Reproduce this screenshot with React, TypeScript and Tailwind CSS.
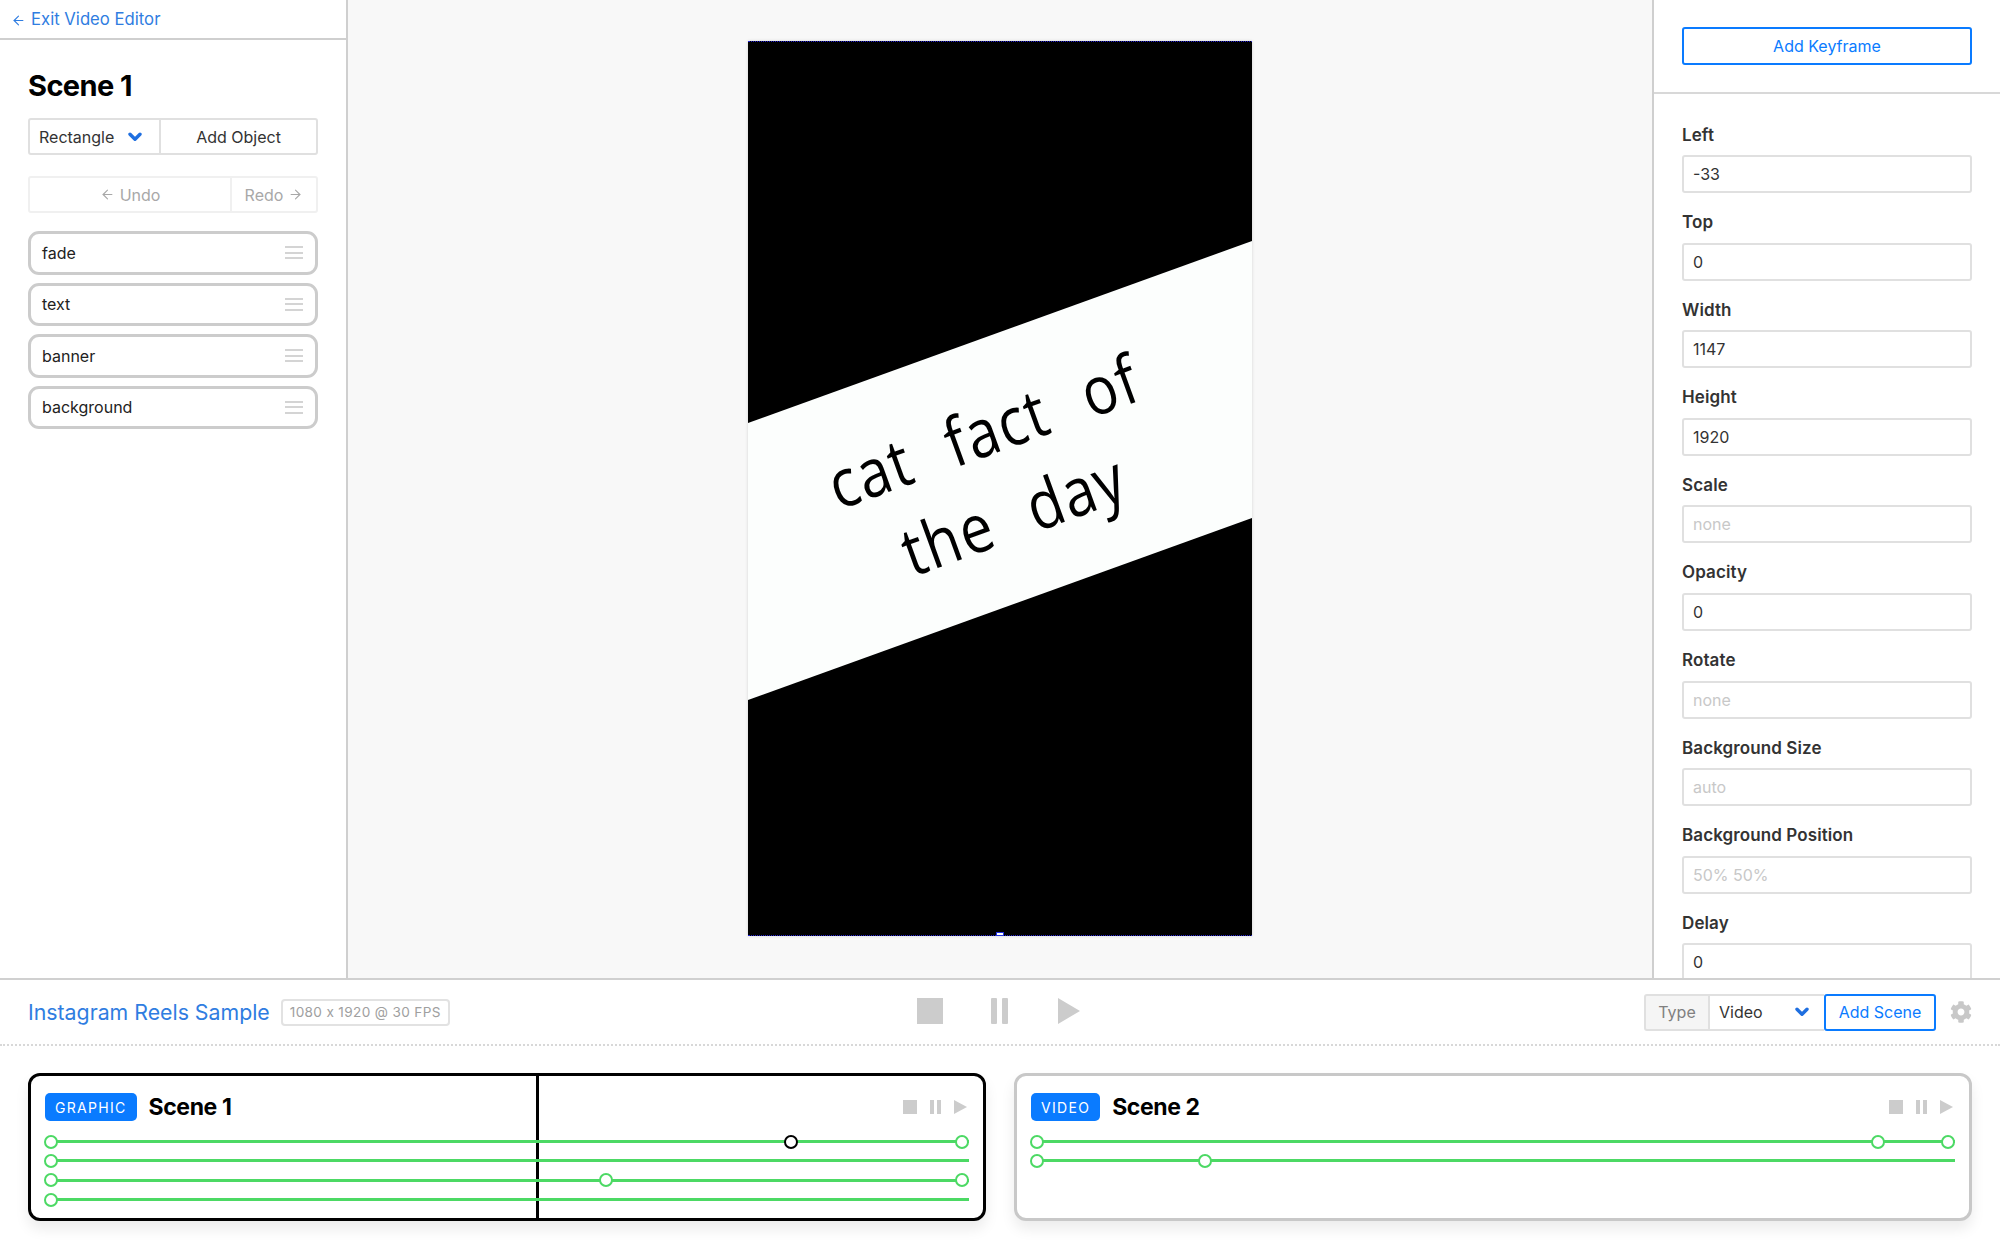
import React from 'react';
import { ArrowLeft, ArrowRight } from 'lucide-react';
import { FaCog } from 'react-icons/fa';

const fields = [
  { label: 'Left', value: '-33' },
  { label: 'Top', value: '0' },
  { label: 'Width', value: '1147' },
  { label: 'Height', value: '1920' },
  { label: 'Scale', placeholder: 'none' },
  { label: 'Opacity', value: '0' },
  { label: 'Rotate', placeholder: 'none' },
  { label: 'Background Size', placeholder: 'auto' },
  { label: 'Background Position', placeholder: '50% 50%' },
  { label: 'Delay', value: '0' },
];

const layers = ['fade', 'text', 'banner', 'background'];

// keyframe positions are px from the start of the track
const scene1Tracks = [
  { keys: [0, 911], active: 740 },
  { keys: [0] },
  { keys: [0, 555, 911] },
  { keys: [0] },
];
const scene2Tracks = [{ keys: [0, 841, 911] }, { keys: [0, 168] }];

const Chevron = ({ className }: { className?: string }) => (
  <svg className={className} width="14" height="10" viewBox="0 0 14 10">
    <path d="M2 2.2 L7 7.2 L12 2.2" fill="none" stroke="#1f6fe0" strokeWidth="3.4" strokeLinecap="round" strokeLinejoin="round" />
  </svg>
);

const Track = ({ keys, active }: { keys: number[]; active?: number }) => (
  <div className="relative h-[19.4px] w-[924px]">
    <div className="absolute left-0 right-0 top-[8px] h-[3px] bg-[#4cd964]" />
    {keys.map((k) => (
      <div
        key={k}
        className="absolute top-[2.5px] ml-[-1px] h-[14px] w-[14px] rounded-full border-2 border-[#4cd964] bg-white"
        style={{ left: k }}
      />
    ))}
    {active !== undefined && (
      <div
        className="absolute top-[2.5px] ml-[-1px] h-[14px] w-[14px] rounded-full border-2 border-black bg-white"
        style={{ left: active }}
      />
    )}
  </div>
);

const Transport = ({ big }: { big?: boolean }) =>
  big ? (
    <div className="flex items-center">
      <div className="h-[26px] w-[26px] bg-[#cccccc]" />
      <div className="ml-[48px] flex gap-[5px]">
        <div className="h-[26px] w-[6px] rounded-[1px] bg-[#cccccc]" />
        <div className="h-[26px] w-[6px] rounded-[1px] bg-[#cccccc]" />
      </div>
      <svg className="ml-[50px]" width="22" height="26" viewBox="0 0 22 26">
        <path d="M0 0 L22 13 L0 26 Z" fill="#cccccc" />
      </svg>
    </div>
  ) : (
    <div className="flex items-center">
      <div className="h-[14px] w-[14px] bg-[#cccccc]" />
      <div className="ml-[13px] flex gap-[3px]">
        <div className="h-[14px] w-[4px] bg-[#cccccc]" />
        <div className="h-[14px] w-[4px] bg-[#cccccc]" />
      </div>
      <svg className="ml-[13px]" width="13" height="14" viewBox="0 0 13 14">
        <path d="M0 0 L13 7 L0 14 Z" fill="#cccccc" />
      </svg>
    </div>
  );

const SceneCard = ({
  tag,
  title,
  active,
  tracks,
  width,
  children,
}: {
  tag: string;
  title: string;
  active?: boolean;
  tracks: { keys: number[]; active?: number }[];
  width: string;
  children?: React.ReactNode;
}) => (
  <div
    className={`relative h-[148px] rounded-[12px] border-[3px] bg-white pl-[14px] pt-[17px] shadow-[0_8px_14px_rgba(0,0,0,0.08)] ${width} ${
      active ? 'border-black' : 'border-[#c8c8c8]'
    }`}
  >
    {children}
    <div className="flex h-[28px] items-center pr-[16px]">
      <span className="flex h-[28px] items-center rounded-[5px] bg-[#0a7bff] px-[10px] text-[14px] tracking-[1.3px] text-white">
        {tag}
      </span>
      <span className="ml-[12px] text-[23px] font-bold tracking-[-0.4px] text-black">{title}</span>
      <div className="ml-auto">
        <Transport />
      </div>
    </div>
    <div className="mt-[11px]">
      {tracks.map((t, i) => (
        <Track key={i} keys={t.keys} active={t.active} />
      ))}
    </div>
  </div>
);

export default function App() {
  return (
    <div className="flex h-screen w-full flex-col overflow-hidden bg-white font-['Inter','Noto_Sans',sans-serif] text-[16px] text-[#333333]">
      <div className="flex h-[978px] shrink-0">
        {/* Left sidebar */}
        <aside className="w-[348px] shrink-0 border-r-2 border-[#cfcfcf] bg-white">
          <div className="flex h-[40px] items-center gap-[5px] border-b-2 border-[#cfcfcf] pl-[11px] pt-[2px] text-[#2f7de1]">
            <ArrowLeft size={15} strokeWidth={1.75} />
            <span className="text-[16.7px]">Exit Video Editor</span>
          </div>
          <div className="px-[28px]">
            <h1 className="mt-[28px] text-[29px] font-bold leading-[36px] tracking-[-0.6px] text-black">Scene 1</h1>
            <div className="mt-[14px] flex h-[37px] rounded-[3px] border-2 border-[#e0e0e0]">
              <div className="flex w-[131px] items-center border-r-2 border-[#e0e0e0] pl-[9px]">
                <span>Rectangle</span>
                <Chevron className="ml-[14px]" />
              </div>
              <div className="flex flex-1 items-center justify-center">Add Object</div>
            </div>
            <div className="mt-[21px] flex h-[37px] rounded-[3px] border-2 border-[#f0f0f0] text-[#a8a8a8]">
              <div className="flex w-[202px] items-center justify-center gap-[5px] border-r-2 border-[#f0f0f0]">
                <ArrowLeft size={15} strokeWidth={1.75} />
                <span>Undo</span>
              </div>
              <div className="flex flex-1 items-center justify-center gap-[5px]">
                <span>Redo</span>
                <ArrowRight size={15} strokeWidth={1.75} />
              </div>
            </div>
            <div className="mt-[18px] flex flex-col gap-[8px]">
              {layers.map((layer) => (
                <div
                  key={layer}
                  className="flex h-[43.5px] items-center justify-between rounded-[11px] border-[3px] border-[#cccccc] pl-[11px] pr-[12px] text-[#222222]"
                >
                  <span>{layer}</span>
                  <div className="flex w-[18px] flex-col gap-[3.5px]">
                    <div className="h-[2px] bg-[#d4d4d4]" />
                    <div className="h-[2px] bg-[#d4d4d4]" />
                    <div className="h-[2px] bg-[#d4d4d4]" />
                  </div>
                </div>
              ))}
            </div>
          </div>
        </aside>

        {/* Canvas */}
        <main className="flex flex-1 justify-center bg-[#f8f8f8] pt-[41px]">
          <div className="relative h-[895px] w-[504px] overflow-hidden bg-black shadow-[0_0_3px_rgba(0,0,0,0.15)]">
            <svg className="absolute inset-0" width="504" height="895" viewBox="0 0 504 895">
              <polygon points="0,382 504,200 504,477 0,659" fill="#fcfefd" />
            </svg>
            <div className="absolute left-[250px] top-[431px] -translate-x-1/2 -translate-y-1/2 rotate-[-20deg] scale-y-[1.16] whitespace-nowrap text-center font-['Open_Sans',sans-serif] text-[58px] leading-[76px] tracking-[1.5px] text-black [word-spacing:22px]">
              cat fact of
              <br />
              the day
            </div>
            <div className="absolute left-0 right-0 top-0 h-px border-t border-dotted border-[#2222cc]" />
            <div className="absolute bottom-0 left-0 right-0 h-px border-t border-dotted border-[#2222cc]" />
            <div className="absolute bottom-0 left-[248px] h-[4px] w-[8px] border border-[#2233dd] bg-white" />
          </div>
        </main>

        {/* Right properties */}
        <aside className="w-[348px] shrink-0 overflow-hidden border-l-2 border-[#cfcfcf] bg-white">
          <div className="h-[94px] border-b-2 border-[#d8d8d8] px-[28px] pt-[27px]">
            <button className="h-[38px] w-full rounded-[3px] border-2 border-[#0a7bff] text-[#0a7bff]">
              Add Keyframe
            </button>
          </div>
          <div className="px-[28px] pt-[28.5px]">
            {fields.map((f) => (
              <div key={f.label} className="h-[87.6px]">
                <div className="mb-[8.5px] text-[17px] font-semibold leading-[24px] tracking-[0.1px] text-[#333333]">{f.label}</div>
                <div
                  className={`flex h-[38px] items-center rounded-[3px] border-2 border-[#e0e0e0] px-[9px] ${
                    f.value !== undefined ? 'text-[#333333]' : 'text-[#c8c8c8]'
                  }`}
                >
                  {f.value ?? f.placeholder}
                </div>
              </div>
            ))}
          </div>
        </aside>
      </div>

      {/* Timeline */}
      <section className="flex-1 border-t-2 border-[#d0d0d0] bg-white">
        <div className="relative flex h-[66px] items-center border-b-2 border-dotted border-[#d8d8d8] pl-[28px] pr-[28px]">
          <span className="pt-[2px] text-[21.3px] text-[#2f7de1]">Instagram Reels Sample</span>
          <span className="ml-[11px] flex h-[27px] items-center rounded-[4px] border-2 border-[#e2e2e2] px-[7px] text-[13.6px] tracking-[0.35px] text-[#a0a0a0]">
            1080 x 1920 @ 30 FPS
          </span>
          <div className="absolute left-[917px] top-[18px]">
            <Transport big />
          </div>
          <div className="ml-auto flex h-[37px] items-stretch">
            <span className="flex w-[66px] items-center justify-center rounded-l-[3px] border-2 border-[#e0e0e0] bg-[#f5f5f5] text-[#808080]">
              Type
            </span>
            <div className="flex w-[114px] items-center border-y-2 border-[#e0e0e0] pl-[9px]">
              <span>Video</span>
              <Chevron className="ml-auto mr-[15px]" />
            </div>
            <button className="w-[112px] rounded-[3px] border-2 border-[#0a7bff] text-[#0a7bff]">Add Scene</button>
          </div>
          <FaCog className="ml-[14px] text-[#c8c8c8]" size={22} />
        </div>
        <div className="flex gap-[28px] pl-[28px] pr-[28px] pt-[27px]">
          <SceneCard tag="GRAPHIC" title="Scene 1" active tracks={scene1Tracks} width="w-[958px]">
            <div className="absolute bottom-0 left-[505px] top-0 w-[3px] bg-black" />
          </SceneCard>
          <SceneCard tag="VIDEO" title="Scene 2" tracks={scene2Tracks} width="w-[958px]" />
        </div>
      </section>
    </div>
  );
}
